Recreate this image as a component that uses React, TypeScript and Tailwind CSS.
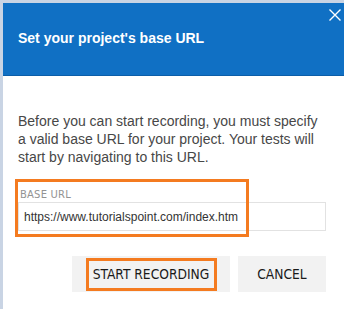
export default function App() {
  return (
    <div className="w-[344px] h-[309px] bg-[#c9d4e4] pt-[3px] pl-[3px] overflow-hidden font-['Liberation_Sans',Arial,sans-serif]">
      <div className="bg-white h-full">
        {/* Header */}
        <div className="relative h-[73px] bg-[#1070c4] border-b border-[#0c5ea8] pl-[15px] pt-[25px]">
          <h1 className="text-white font-bold text-[14px] leading-[20px]">Set your project's base URL</h1>
          <svg className="absolute left-[326px] top-[6px] w-[12px] h-[12px]" viewBox="0 0 12 12" fill="none">
            <path d="M0.5 0.5L11.5 11.5M11.5 0.5L0.5 11.5" stroke="white" strokeWidth="1.4" />
          </svg>
        </div>

        {/* Body */}
        <div className="pl-[15px] pr-[20px] pt-[36px]">
          <p className="text-[#474747] text-[14px] leading-[18px]">
            Before you can start recording, you must specify a valid base URL for your project. Your tests will start by navigating to this URL.
          </p>

          <div className="relative mt-[23px] w-[308px]">
            <div className="absolute left-[-3px] top-[-10px] w-[234px] h-[58px] border-[3px] border-[#f47b20] pointer-events-none" />
            <label className="block pl-[2px] text-[10px] leading-[12px] text-[#939393] font-['DejaVu_Sans',sans-serif] tracking-[0.2px]">BASE URL</label>
            <div className="mt-[1px] h-[29px] border border-[#e2e2e2] flex items-center pl-[5px] text-[12px] text-[#333]">
              https://www.tutorialspoint.com/index.htm
            </div>
          </div>

          <div className="flex justify-end gap-[8px] mt-[25px] w-[308px]">
            <button className="w-[158px] h-[36px] bg-[#f2f2f2] flex items-center justify-center">
              <span className="border-[3px] border-[#f47b20] w-[131px] h-[33px] flex items-center justify-center text-[13.7px] text-[#1a1a1a] font-['DejaVu_Sans_Condensed','DejaVu_Sans',sans-serif]">
                START RECORDING
              </span>
            </button>
            <button className="w-[88px] h-[36px] bg-[#f2f2f2] flex items-center justify-center text-[13.7px] text-[#1a1a1a] font-['DejaVu_Sans_Condensed','DejaVu_Sans',sans-serif]">
              CANCEL
            </button>
          </div>
        </div>
      </div>
    </div>
  );
}
